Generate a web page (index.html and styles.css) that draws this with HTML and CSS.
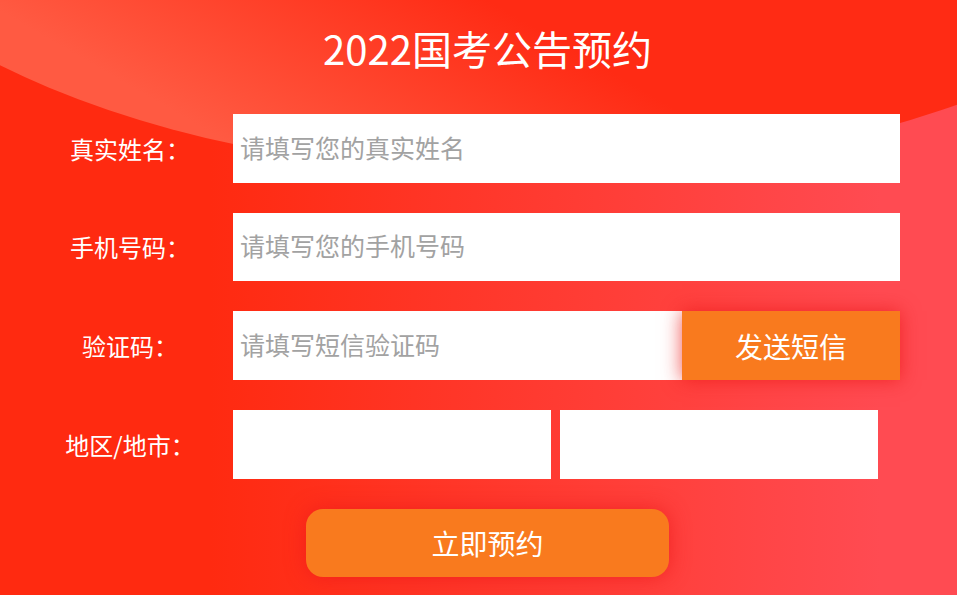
FILE: index.html
```html
<!DOCTYPE html>
<html lang="zh-CN">
<head>
<meta charset="utf-8">
<title>2022国考公告预约</title>
<link rel="stylesheet" href="styles.css">
</head>
<body>
<div class="page">
  <div class="arc"></div>
  <h1 class="title">2022国考公告预约</h1>
  <form class="form">
    <div class="row">
      <label class="label">真实姓名：</label>
      <input class="field" type="text" placeholder="请填写您的真实姓名">
    </div>
    <div class="row">
      <label class="label">手机号码：</label>
      <input class="field" type="text" placeholder="请填写您的手机号码">
    </div>
    <div class="row">
      <label class="label">验证码：</label>
      <div class="code-group">
        <input class="field field-code" type="text" placeholder="请填写短信验证码">
        <button class="sms" type="button">发送短信</button>
      </div>
    </div>
    <div class="row">
      <label class="label">地区/地市：</label>
      <div class="selects">
        <select class="select"><option></option></select>
        <select class="select"><option></option></select>
      </div>
    </div>
    <div class="actions">
      <button class="submit" type="button">立即预约</button>
    </div>
  </form>
</div>
</body>
</html>
```

FILE: styles.css
```css
html, body {
  margin: 0;
  padding: 0;
  width: 957px;
  height: 595px;
  overflow: hidden;
}

body {
  font-family: "Noto Sans CJK SC", "Noto Sans", sans-serif;
  background: linear-gradient(90deg, #ff2a10 22%, #ff4b52 92%);
}

.page {
  position: relative;
  width: 957px;
  height: 595px;
  padding-top: 20px;
  box-sizing: border-box;
  overflow: hidden;
}

.arc {
  position: absolute;
  left: -225px;
  top: -586px;
  width: 1500px;
  height: 760px;
  border-radius: 50%;
  background: linear-gradient(30deg, #ff5a42 18%, #ff2b14 36%);
}

.title {
  position: relative;
  margin: 0;
  padding-left: 18px;
  text-align: center;
  font-size: 40px;
  line-height: 56px;
  font-weight: normal;
  color: #fff;
}

.form {
  position: relative;
  margin-top: 38px;
  display: flex;
  flex-direction: column;
  gap: 30px;
}

.row {
  display: flex;
  align-items: center;
  gap: 3px;
  padding-left: 30px;
  height: 68.67px;
}

.label {
  width: 200px;
  text-align: center;
  color: #fff;
  font-size: 24px;
}

.field {
  width: 667px;
  height: 100%;
  box-sizing: border-box;
  border: none;
  outline: none;
  margin: 0;
  padding: 0 7px 3px;
  background: #fff;
  font-family: inherit;
  font-size: 25px;
  color: #333;
}

.field::placeholder {
  color: #a2a2a2;
}

.code-group {
  display: flex;
  height: 100%;
}

.field-code {
  width: 449px;
}

.sms {
  width: 218px;
  height: 100%;
  border: none;
  margin: 0;
  padding: 0;
  background: #f97a1e;
  color: #fff;
  font-family: inherit;
  font-size: 28px;
  box-shadow: 0 0 18px rgba(235, 25, 25, 0.75);
  position: relative;
}

.selects {
  display: flex;
  gap: 9px;
  height: 100%;
}

.select {
  width: 318px;
  height: 100%;
  border: none;
  border-radius: 0;
  margin: 0;
  background: #fff;
  -webkit-appearance: none;
  appearance: none;
  outline: none;
}

.actions {
  display: flex;
  justify-content: center;
  padding-left: 18px;
}

.submit {
  width: 363px;
  height: 68px;
  border: none;
  border-radius: 17px;
  background: #f97a1e;
  color: #fff;
  font-family: inherit;
  font-size: 28px;
  box-shadow: 0 0 20px rgba(235, 25, 25, 0.7);
}
```
